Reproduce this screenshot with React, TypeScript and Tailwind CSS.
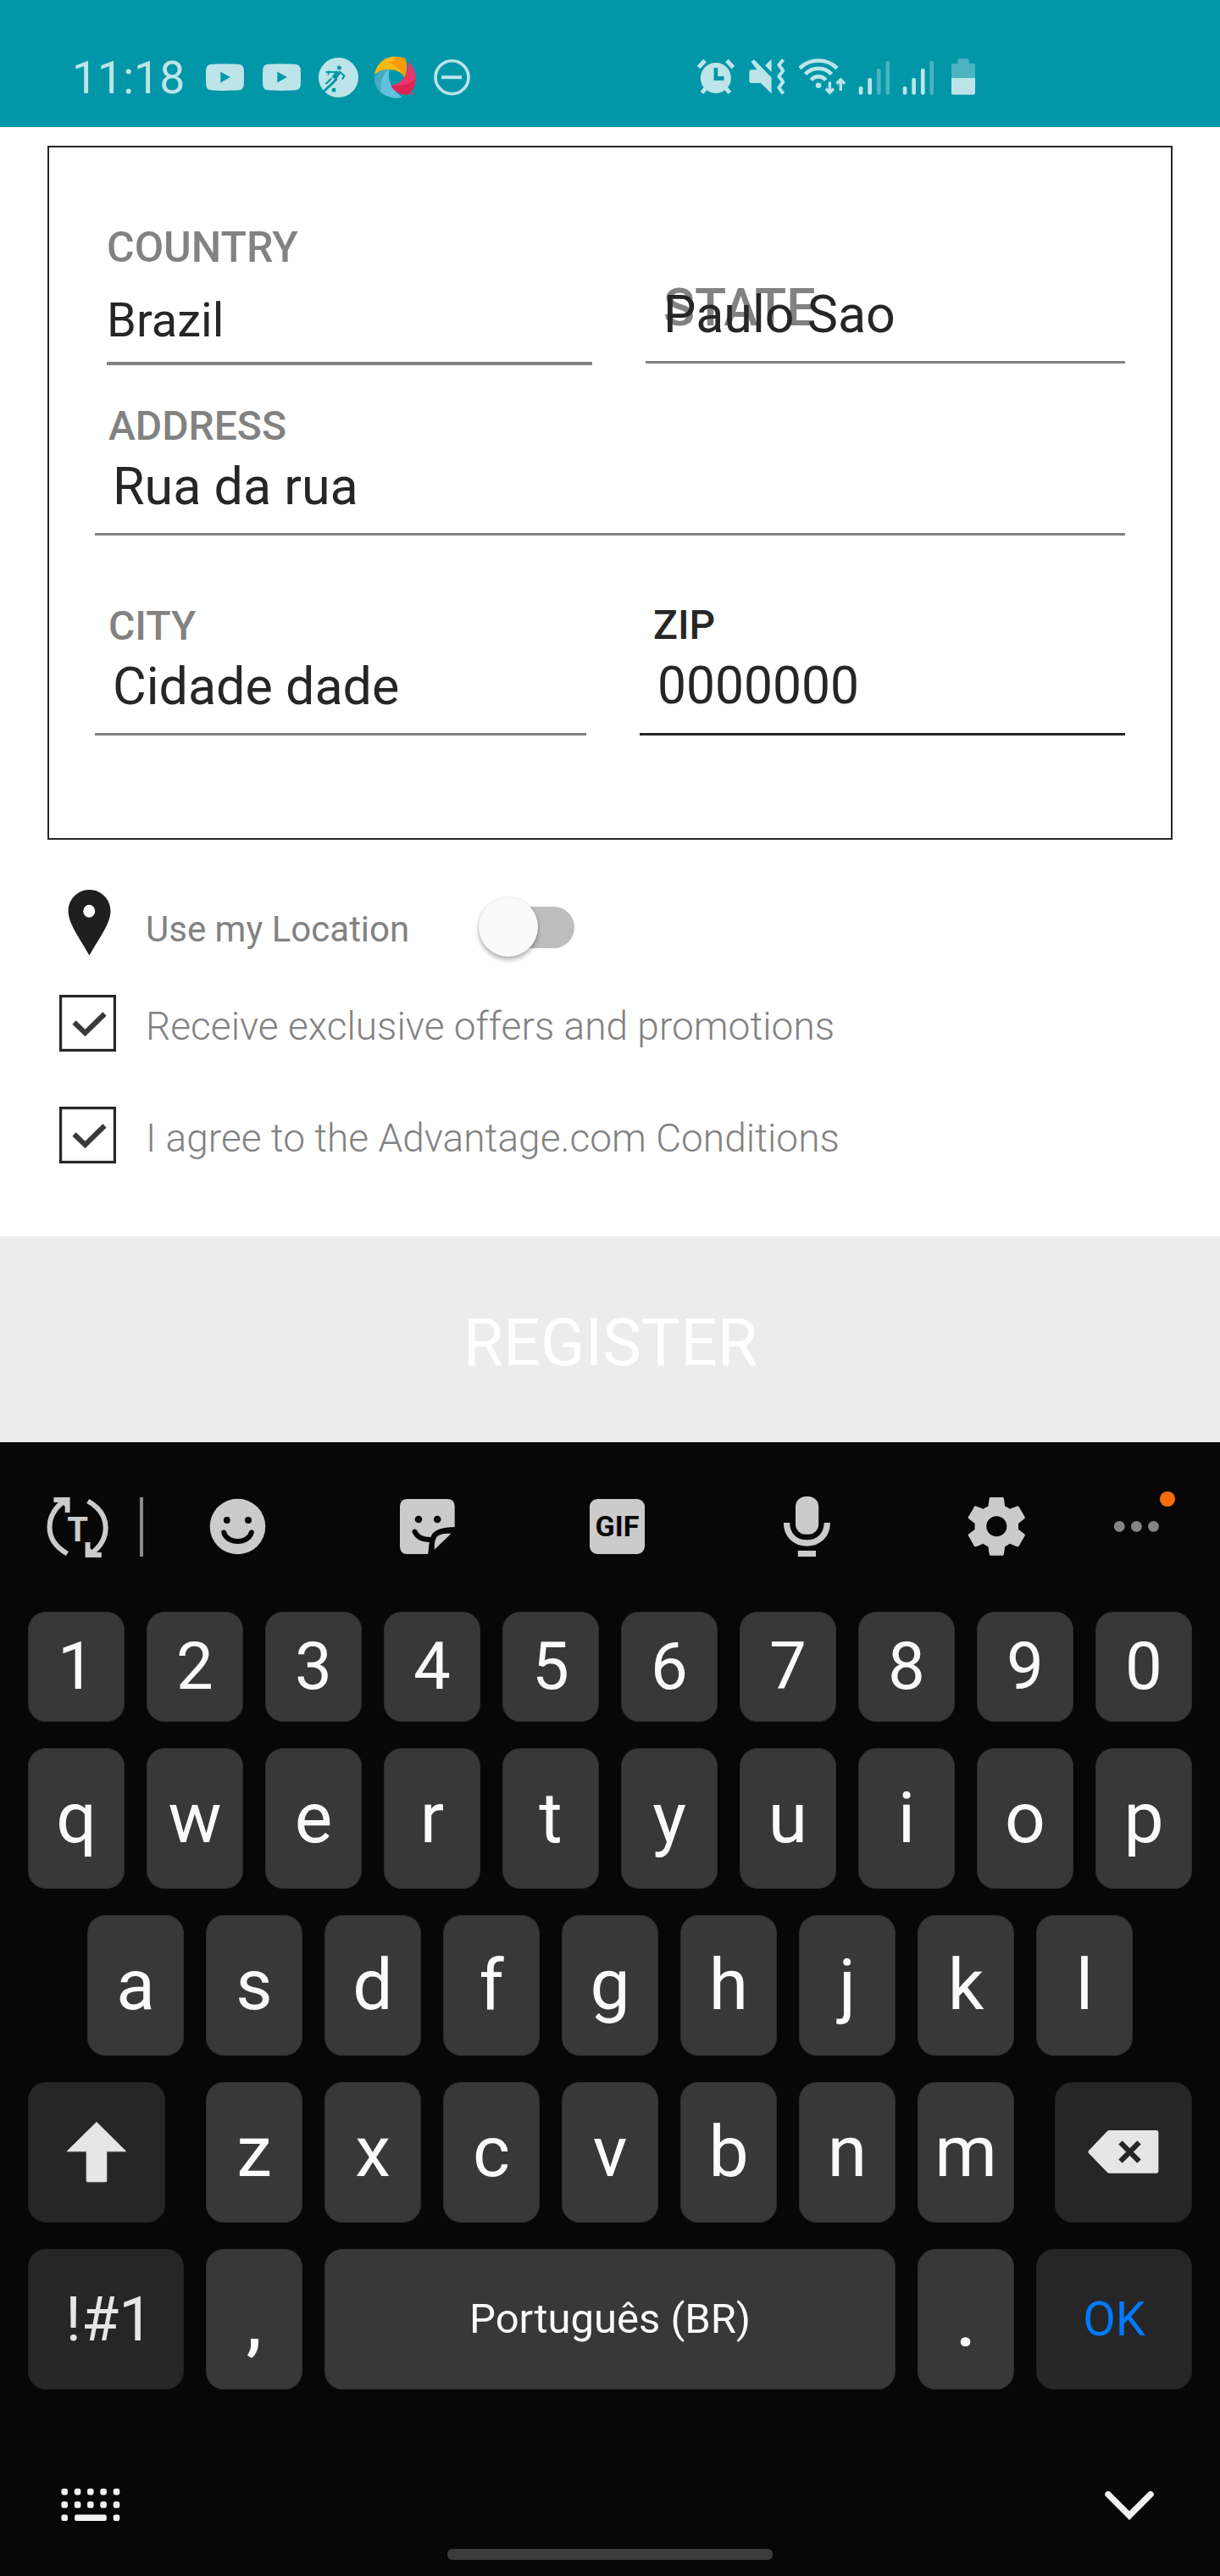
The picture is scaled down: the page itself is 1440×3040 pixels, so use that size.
import React from "react";

const LIGHT = "#bde4e8";
const TEAL = "#0197a8";
const DIM = "#4bb4c1";
const ICON = "#cbcbcb";
const KEYBOARD_BG = "#070707";

type IconProps = { className: string; viewBox: string; children: React.ReactNode };

function Icon({ className, viewBox, children }: IconProps) {
  return (
    <svg className={`block shrink-0 ${className}`} viewBox={viewBox} fill="none">
      {children}
    </svg>
  );
}

function VideoIcon({ className }: { className: string }) {
  return (
    <Icon className={`h-[60px] w-[45px] ${className}`} viewBox="243 60 45 60">
      <path
        d="M250 75.8Q265.500 74.800 281 75.800Q287.500 76 287.800 82.500Q288.200 91 287.800 100Q287.500 106.300 281 106.600Q265.500 107.400 250 106.600Q243.500 106.300 243.200 100Q242.800 91 243.200 82.500Q243.500 76 250 75.800Z"
        fill={LIGHT}
      />
      <path d="M260.300 84.700V97.500L271.900 91.100Z" fill={TEAL} />
    </Icon>
  );
}

function SignalBars({ x, level, className }: { x: number; level: number; className: string }) {
  const tops = [102, 92, 81, 72];
  return (
    <Icon className={`h-[60px] w-[37px] ${className}`} viewBox="0 60 37 60">
      {tops.map((top, i) => (
        <rect
          key={top}
          x={x + i * 10.6}
          y={top}
          width={4.700}
          height={111.700 - top}
          rx={2}
          fill={i < level ? LIGHT : DIM}
        />
      ))}
    </Icon>
  );
}

function StatusBar() {
  return (
    <header className="flex h-[150px] items-start bg-[#0197a8] pt-[60px]">
      <div className="w-[243px] pl-[85px] text-[53.500px] leading-[64px] font-normal text-[#bde4e8]">11:18</div>
      <VideoIcon className="" />
      <VideoIcon className="ml-[22px]" />
      <Icon className="ml-[20px] h-[60px] w-[49px]" viewBox="375 60 49 60">
        <circle cx="399.500" cy="91.500" r="23.500" fill={LIGHT} />
        <circle cx="400.400" cy="80" r="2.500" fill={TEAL} />
        <circle cx="394" cy="106.300" r="2.500" fill={TEAL} />
        <g stroke={TEAL} strokeLinejoin="round">
          <path d="M384.500 85H396" strokeWidth="2" />
          <path d="M399.500 85L394 92.500" strokeWidth="6" />
          <path d="M400 84L406.500 89.500L404 93.500" strokeWidth="2.200" />
          <path d="M397.500 93L391 99.500L382 108" strokeWidth="3" />
          <path d="M391.500 92.500L384.500 99" strokeWidth="2.200" />
          <path d="M389 83.500L387 88.500" strokeWidth="1.800" />
        </g>
      </Icon>
      <Icon className="ml-[17px] h-[60px] w-[52px]" viewBox="441 60 52 60">
        <path d="M442 88C444 76 454 66.500 466.500 66.800C471 67 475 68 478.400 69.300C480.500 76 480.500 84 477.500 91C474 85 467 82 459 82C452 82 447 84 442 88Z" fill="#fcb813" />
        <path d="M466 67C471 67 475 68 478.400 69.300C480.500 76 480.500 84 477.500 91C474 86 471 77 455 73C464 74 468 72 466 67Z" fill="#fb9a05" />
        <path d="M442.200 93C441.500 88 449 82.300 460 82.300C457 91 460 104 474.700 114.700C464 118.500 443 112 442.200 93Z" fill="#62c1dc" />
        <path d="M442.200 92C442.500 87 451 82.300 460 82.300C451 86 448 99 450 110C444 104 442 98 442.200 92Z" fill="#46a9c4" />
        <path d="M482 72.500C489 79 492.500 91 489.800 100C488 106 485 110 481 111.700C473 112.500 465 108 461.400 100.500C473 100 482 90 482 72.500Z" fill="#f0356d" />
        <path d="M461.400 101C473 102 484 99 490 94C490 101 487 109 481 111.700C473 112.500 465 108 461.400 101Z" fill="#dc2453" />
        <path d="M485 110.500H490" stroke="#e93468" strokeWidth="1.500" />
      </Icon>
      <Icon className="ml-[18px] h-[60px] w-[45px]" viewBox="511 60 45 60">
        <circle cx="533.500" cy="91.300" r="19.500" stroke={LIGHT} strokeWidth="3.600" />
        <path d="M521 91.200H545" stroke={LIGHT} strokeWidth="4" />
      </Icon>
      <Icon className="ml-[266px] h-[60px] w-[46px]" viewBox="822 60 46 60">
        <g stroke={LIGHT} strokeWidth="5">
          <path d="M824.500 79.500L832 71.500M865.400 79.500L857.900 71.500" />
          <path d="M828.500 109.500L834 103M861.300 109.500L855.800 103" />
        </g>
        <circle cx="844.900" cy="92" r="18" fill={LIGHT} />
        <path d="M842.600 80H847.200V90H854.500V95H842.600Z" fill={TEAL} />
      </Icon>
      <Icon className="ml-[15px] h-[60px] w-[44px]" viewBox="883 60 44 60">
        <path d="M886.500 73L890 70.300L910.600 91.500V110.500L898 98H887Q884.400 98 884.400 95.500V85Q884.400 82.300 887 82.300H893.500Z" fill={LIGHT} />
        <path d="M910.600 70V85L903 77.300Z" fill={LIGHT} />
        <path d="M924.500 70.500L919.300 76.500L924.300 83.500L919.300 90L924.300 96.500L919.300 103.500L924.500 110.500" stroke={LIGHT} strokeWidth="4" strokeLinejoin="round" />
      </Icon>
      <Icon className="ml-[14px] h-[60px] w-[60px]" viewBox="941 60 60 60">
        <g stroke={LIGHT} strokeWidth="4.600">
          <path d="M944 80.500C956 68.500 976 68.500 988 80.500" />
          <path d="M950.500 87.500C959 78.500 973 78.500 981.500 87.500" />
          <path d="M957.500 94.500C962 89 970 89 974.800 94.500" />
        </g>
        <circle cx="966.100" cy="100.700" r="3.300" fill={LIGHT} />
        <g stroke={LIGHT} strokeWidth="3.400">
          <path d="M979.400 96.500V108M974.800 104.700L979.400 109.300L984 104.700" />
          <path d="M992.300 107V95M987.500 98.700L992.300 94L997.100 98.700" />
        </g>
      </Icon>
      <SignalBars x={0.700} level={2} className="ml-[12px]" />
      <SignalBars x={0.700} level={3} className="ml-[15px]" />
      <Icon className="ml-[20px] h-[60px] w-[30px]" viewBox="1123 60 30 60">
        <path d="M1126 75H1131.400V70.500Q1131.400 69.200 1133 69.200H1143Q1144.700 69.200 1144.700 70.500V75H1150Q1152 75 1152 77V92H1124V77Q1124 75 1126 75Z" fill={DIM} />
        <path d="M1124 92H1152V110Q1152 111.800 1150 111.800H1126Q1124 111.800 1124 110Z" fill={LIGHT} />
      </Icon>
    </header>
  );
}

function AddressForm() {
  return (
    <section className="mx-[56px] mt-[22px] h-[819px] border-2 border-[#262626] leading-[60px] text-[#262626]">
      <div className="flex h-[257px] items-start">
        <div className="ml-[68px] w-[573px] border-b-4 border-[#828282] pt-[88px] pb-[19px]">
          <div className="text-[50px] font-medium text-[#828282]">COUNTRY</div>
          <div className="mt-[26px] text-[56px]">Brazil</div>
        </div>
        <div className="relative ml-[63px] w-[566px] border-b-3 border-[#828282] pt-[167px] pb-[25px] pl-[21px]">
          <div className="absolute top-[159px] left-[21px] text-[61px] font-medium text-[#828282]">STATE</div>
          <div className="relative text-[61px]">Paulo Sao</div>
        </div>
      </div>
      <div className="ml-[54px] w-[1216px] border-b-3 border-[#828282] pt-[42px] pb-[25px]">
        <div className="pl-[16px] text-[48px] font-medium text-[#828282]">ADDRESS</div>
        <div className="mt-[11px] pl-[21px] text-[61px]">Rua da rua</div>
      </div>
      <div className="flex items-start">
        <div className="ml-[54px] w-[580px] border-b-3 border-[#828282] pt-[77px] pb-[25px]">
          <div className="pl-[16px] text-[48px] font-medium text-[#828282]">CITY</div>
          <div className="mt-[11px] pl-[21px] text-[61px]">Cidade dade</div>
        </div>
        <div className="ml-[63px] w-[573px] border-b-3 border-[#262626] pt-[76px] pb-[25px]">
          <div className="pl-[16px] text-[48px] font-medium">ZIP</div>
          <div className="mt-[12px] pl-[21px] text-[60.500px]">0000000</div>
        </div>
      </div>
    </section>
  );
}

function CheckRow({ label, className }: { label: string; className: string }) {
  return (
    <div className={`flex h-[67px] items-start ${className}`}>
      <div className="h-[67px] w-[67px] border-[3px] border-[#262626] shadow-[inset_0_0_2px_#777]">
        <Icon className="h-[61px] w-[61px]" viewBox="73 1177 61 61">
          <path d="M87.500 1206.500L100.500 1219L123.500 1196.500" stroke="#3a3a3a" strokeWidth="6" />
        </Icon>
      </div>
      <div className="mt-[7px] ml-[35px] text-[46px] leading-[60px] font-light tracking-[0.030px] whitespace-nowrap text-[#828282]">{label}</div>
    </div>
  );
}

function Options() {
  return (
    <section className="h-[468px] pl-[70px] pt-[54px]">
      <div className="flex h-[129px] items-start">
        <Icon className="h-[90px] w-[70px]" viewBox="70 1045 70 90">
          <path
            fillRule="evenodd"
            d="M105.500 1050C119 1050 130.500 1061 130.500 1075C130.500 1090 117 1107 105.500 1127.500C94 1107 80.600 1090 80.600 1075C80.600 1061 92 1050 105.500 1050ZM105.200 1067.800A7 7.500 0 1 0 105.200 1082.800A7 7.500 0 1 0 105.200 1067.800Z"
            fill="#1f1f1f"
          />
        </Icon>
        <div className="mt-[22px] ml-[32px] w-[393px] text-[42px] leading-[60px] text-[#828282]">Use my Location</div>
        <div className="relative mt-[14px] h-[70px] w-[113px]">
          <div className="absolute top-[11px] left-[11px] h-[49px] w-[102px] rounded-full bg-[#bdbdbd]" />
          <div className="absolute top-0 left-0 h-[70px] w-[70px] rounded-full bg-[#fafafa] shadow-[0_4px_5px_rgba(0,0,0,0.28),0_0_3px_rgba(0,0,0,0.12)]" />
        </div>
      </div>
      <CheckRow className="" label="Receive exclusive offers and promotions" />
      <CheckRow className="mt-[65px]" label="I agree to the Advantage.com Conditions" />
    </section>
  );
}

function Toolbar() {
  return (
    <div className="flex h-[200px] items-start pt-[50px]">
      <Icon className="ml-[52px] h-[100px] w-[80px]" viewBox="52 1752 80 100">
        <g>
          <path d="M79.500 1833.500C66 1826 58.500 1815 58.500 1802C58.500 1790 65 1779.500 75 1772" stroke={ICON} strokeWidth="6" />
          <path d="M63.400 1767H82.600V1785H76.700V1778L72 1773H63.400Z" fill={ICON} />
        </g>
        <g transform="rotate(180 91.600 1802.500)">
          <path d="M79.500 1833.500C66 1826 58.500 1815 58.500 1802C58.500 1790 65 1779.500 75 1772" stroke={ICON} strokeWidth="6" />
          <path d="M63.400 1767H82.600V1785H76.700V1778L72 1773H63.400Z" fill={ICON} />
        </g>
        <text x="91.600" y="1819" textAnchor="middle" fontSize="40" fontWeight="700" fill={ICON}>T</text>
      </Icon>
      <div className="mt-[15px] ml-[33px] h-[70px] w-[4px] bg-[#8a8a8a]" />
      <Icon className="ml-[76px] h-[100px] w-[72px]" viewBox="245 1752 72 100">
        <circle cx="280.500" cy="1801.500" r="32.800" fill={ICON} />
        <circle cx="267.800" cy="1794" r="4" fill={KEYBOARD_BG} />
        <circle cx="293" cy="1794" r="4" fill={KEYBOARD_BG} />
        <path d="M264.200 1808.500C268 1822.500 293 1822.500 296.800 1808.500" stroke={KEYBOARD_BG} strokeWidth="6" strokeLinecap="round" />
      </Icon>
      <Icon className="ml-[153px] h-[100px] w-[70px]" viewBox="470 1752 70 100">
        <path d="M481 1769H528Q536.700 1769 536.700 1778V1802C521 1803 508 1804 506.500 1822L505.200 1834H481Q472 1834 472 1825V1778Q472 1769 481 1769Z" fill={ICON} />
        <path d="M532.500 1809.700C517 1809.500 512 1812 512.900 1828.700Z" fill={ICON} />
        <circle cx="494" cy="1793" r="4.300" fill={KEYBOARD_BG} />
        <circle cx="516.200" cy="1793" r="4.300" fill={KEYBOARD_BG} />
        <path d="M489.500 1807.500C492 1813 498 1817 507.500 1817" stroke={KEYBOARD_BG} strokeWidth="6" strokeLinecap="round" />
      </Icon>
      <div className="mt-[17px] ml-[156px] flex h-[65px] w-[65px] items-center justify-center rounded-[9px] bg-[#cbcbcb] text-[34px] leading-[65px] font-bold text-[#070707]">
        GIF
      </div>
      <Icon className="ml-[161px] h-[100px] w-[60px]" viewBox="922 1752 60 100">
        <rect x="939" y="1766" width="27.200" height="44.800" rx="12" fill={ICON} />
        <path d="M928.500 1797C928.500 1811 938 1821 952.400 1821S976.300 1811 976.300 1797" stroke={ICON} strokeWidth="7.300" />
        <rect x="941.800" y="1830" width="21.200" height="7" fill={ICON} />
      </Icon>
      <svg className="ml-[153px] mt-[8px] block h-[82.600px] w-[82.600px] shrink-0" viewBox="0 0 24 24" fill={ICON}>
        <path d="M19.430 12.980c.04-.32.07-.64.07-.98s-.03-.66-.07-.98l2.110-1.650c.19-.15.24-.42.12-.64l-2-3.460c-.12-.22-.39-.3-.61-.22l-2.490 1c-.52-.4-1.080-.73-1.690-.98l-.38-2.650C14.460 2.180 14.250 2 14 2h-4c-.25 0-.46.18-.49.42l-.38 2.650c-.61.25-1.170.59-1.690.98l-2.490-1c-.23-.09-.49 0-.61.22l-2 3.460c-.13.22-.07.49.12.64l2.110 1.650c-.04.32-.07.65-.07.98s.03.66.07.98l-2.110 1.650c-.19.15-.24.42-.12.64l2 3.460c.12.22.39.3.61.22l2.490-1c.52.4 1.080.73 1.690.98l.38 2.650c.03.24.24.42.49.42h4c.25 0 .46-.18.49-.42l.38-2.650c.61-.25 1.170-.59 1.690-.98l2.490 1c.23.09.49 0 .61-.22l2-3.460c.12-.22.07-.49-.12-.64l-2.110-1.650zM12 15.500c-1.930 0-3.500-1.570-3.500-3.500s1.570-3.500 3.500-3.500 3.500 1.570 3.500 3.500-1.570 3.500-3.500 3.500z" />
      </svg>
      <Icon className="ml-[92px] h-[100px] w-[80px]" viewBox="1310 1752 80 100">
        <circle cx="1321.200" cy="1801.400" r="6.400" fill="#858585" />
        <circle cx="1341.400" cy="1801.400" r="6.400" fill="#858585" />
        <circle cx="1361.500" cy="1801.400" r="6.400" fill="#858585" />
        <circle cx="1378" cy="1769" r="9.100" fill="#f96b0c" />
      </Icon>
    </div>
  );
}

const KEY =
  "flex shrink-0 items-center justify-center rounded-[21px] border border-[#2d2d2d] bg-[#383838] text-[#fafafa]";
const DARK_KEY =
  "flex shrink-0 items-center justify-center rounded-[21px] border border-[#202020] bg-[#262626] text-[#e6e6e6]";

function Letters({ keys }: { keys: string }) {
  return (
    <>
      {keys.split("").map((k) => (
        <div key={k} className={`${KEY} h-[166px] w-[114px] text-[84px] leading-[100px]`}>
          {k}
        </div>
      ))}
    </>
  );
}

function Keyboard() {
  return (
    <section className="flex h-[1338px] flex-col bg-[#070707]">
      <Toolbar />
      <div className="flex flex-col gap-[31px]">
        <div className="flex justify-center gap-[26px]">
          {"1234567890".split("").map((k) => (
            <div key={k} className={`${KEY} h-[130px] w-[114px] text-[78px] leading-[100px]`}>
              {k}
            </div>
          ))}
        </div>
        <div className="flex justify-center gap-[26px]">
          <Letters keys="qwertyuiop" />
        </div>
        <div className="flex justify-center gap-[26px]">
          <Letters keys="asdfghjkl" />
        </div>
        <div className="flex justify-between px-[33px]">
          <div className={`${DARK_KEY} h-[166px] w-[162px]`}>
            <Icon className="h-[76px] w-[76px]" viewBox="76 2502 76 76">
              <path d="M114 2504.500L148.500 2538.800H125.800V2573.500Q125.800 2574.800 124.500 2574.800H103.500Q102.200 2574.800 102.200 2573.500V2538.800H79.200Z" fill="#e6e6e6" stroke="#e6e6e6" strokeLinejoin="round" />
            </Icon>
          </div>
          <div className="flex gap-[26px]">
            <Letters keys="zxcvbnm" />
          </div>
          <div className={`${DARK_KEY} h-[166px] w-[162px]`}>
            <Icon className="h-[60px] w-[90px]" viewBox="1281 2510 90 60">
              <path d="M1309.500 2514H1364.500Q1367.400 2514 1367.400 2517V2562Q1367.400 2564.800 1364.500 2564.800H1309.500Q1308 2564.800 1307 2563.800L1285 2541Q1284 2539.500 1285 2538L1307 2515Q1308 2514 1309.500 2514Z" fill="#e6e6e6" />
              <path d="M1322.500 2528.300L1344.500 2550.700M1344.500 2528.300L1322.500 2550.700" stroke="#262626" strokeWidth="6.200" />
            </Icon>
          </div>
        </div>
        <div className="flex gap-[26px] px-[33px]">
          <div className={`${DARK_KEY} h-[166px] w-[184px] pt-[1px] pl-[8px] text-[72px]`}>!#1</div>
          <div className={`${KEY} h-[166px] w-[114px] pt-[8px] text-[84px] leading-[100px] font-medium`}>,</div>
          <div className={`${KEY} h-[166px] w-[674px] text-[49px]`}>Português (BR)</div>
          <div className={`${KEY} h-[166px] w-[114px] pt-[8px] text-[84px] leading-[100px] font-medium`}>.</div>
          <div className={`${DARK_KEY} h-[166px] w-[184px] text-[56px]`}>
            <span className="text-[#007aff]">OK</span>
          </div>
        </div>
      </div>
      <div className="mt-[110px] flex justify-between pr-[70px] pl-[70px]">
        <Icon className="h-[60px] w-[75px]" viewBox="70 2930 75 60">
          {[2940.600, 2955.900, 2971.200].map((y, row) =>
            [76.200, 91.600, 106.800, 122.100, 137.500].map((x, col) =>
              row === 2 && col > 0 && col < 4 ? null : (
                <rect key={`${x}-${y}`} x={x - 3.800} y={y - 3.800} width="7.600" height="7.600" rx="2.800" fill="#f2f2f2" />
              ),
            ),
          )}
          <rect x="88" y="2967.400" width="37.800" height="7.600" rx="2.800" fill="#f2f2f2" />
        </Icon>
        <Icon className="h-[60px] w-[70px]" viewBox="1300 2930 70 60">
          <path d="M1308 2943.700L1333 2968.700L1358 2943.700" stroke="#f2f2f2" strokeWidth="7.500" strokeLinecap="round" />
        </Icon>
      </div>
      <div className="mx-auto mt-[18px] h-[13px] w-[384px] rounded-[6px] bg-[#3b3b3b]" />
    </section>
  );
}

export default function App() {
  return (
    <main className="h-[3040px] w-[1440px] overflow-hidden bg-white font-[Roboto,sans-serif]">
      <StatusBar />
      <AddressForm />
      <Options />
      <div className="flex h-[243px] items-center justify-center bg-[#ececec] pt-[8px] pl-[1px] text-[77px] leading-[100px] text-white">
        REGISTER
      </div>
      <Keyboard />
    </main>
  );
}
